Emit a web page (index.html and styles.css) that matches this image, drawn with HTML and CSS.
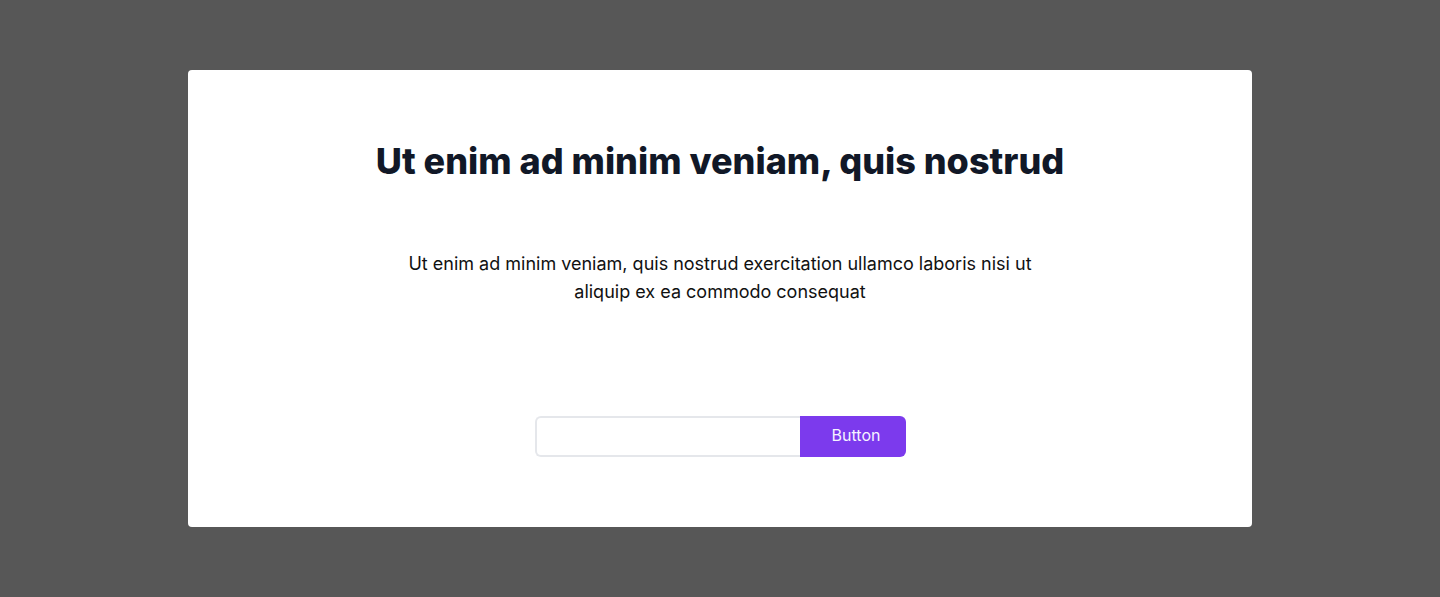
FILE: index.html
```html
<!DOCTYPE html>
<html lang="en">
<head>
<meta charset="utf-8">
<link rel="stylesheet" href="styles.css">
</head>
<body>
<div class="overlay">
  <div class="modal">
    <h1 class="title">Ut enim ad minim veniam, quis nostrud</h1>
    <p class="text">Ut enim ad minim veniam, quis nostrud exercitation ullamco laboris nisi ut aliquip ex ea commodo consequat</p>
    <form class="form">
      <input class="input" type="text">
      <button class="button" type="button">Button</button>
    </form>
  </div>
</div>
</body>
</html>
```
FILE: styles.css
```css
* { box-sizing: border-box; }
html, body { margin: 0; padding: 0; }
body {
  font-family: Inter, "Noto Sans", sans-serif;
  background: #575757;
  height: 597px;
}
.overlay {
  height: 597px;
  display: flex;
  align-items: center;
  justify-content: center;
}
.modal {
  width: 1064px;
  height: 457px;
  background: #ffffff;
  border-radius: 4px;
  padding: 71px 0 0;
  display: flex;
  flex-direction: column;
  align-items: center;
}
.title {
  margin: 0;
  font-size: 36px;
  line-height: 40px;
  font-weight: 800;
  color: #111827;
}
.text {
  margin: 69px 0 0;
  max-width: 640px;
  text-align: center;
  font-size: 18px;
  line-height: 28px;
  color: #111111;
}
.form {
  margin-top: 110px;
  display: flex;
}
.input {
  width: 265px;
  height: 41px;
  border: 2px solid #e5e7eb;
  border-right: none;
  border-radius: 6px 0 0 6px;
  outline: none;
  font-family: inherit;
  font-size: 16px;
  padding: 0 12px;
}
.button {
  width: 106px;
  height: 41px;
  border: none;
  background: #7c3aed;
  color: #f5f3ff;
  font-family: inherit;
  font-size: 16px;
  border-radius: 0 6px 6px 0;
  padding: 0 0 4px 7px;
}
```
